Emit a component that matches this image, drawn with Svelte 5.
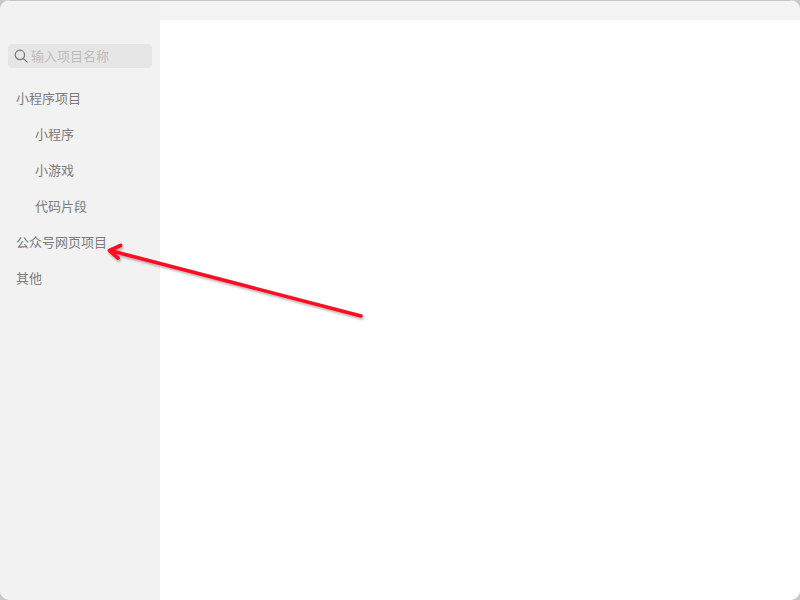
<script lang="ts">
  const items = [
    { label: "小程序项目", child: false },
    { label: "小程序", child: true },
    { label: "小游戏", child: true },
    { label: "代码片段", child: true },
    { label: "公众号网页项目", child: false },
    { label: "其他", child: false },
  ];
</script>

<div class="desktop">
  <div class="window">
    <aside class="sidebar">
      <div class="search">
        <svg class="search-icon" width="14" height="14" viewBox="0 0 14 14" fill="none" stroke="#777" stroke-width="1.2">
          <circle cx="5.9" cy="5.9" r="4.7" />
          <path d="M9.3 9.3 13.2 13.2" stroke-linecap="round" />
        </svg>
        <span class="placeholder">输入项目名称</span>
      </div>
      <nav class="menu">
        {#each items as item}
          <div class="item" class:child={item.child}>{item.label}</div>
        {/each}
      </nav>
    </aside>
    <main class="main">
      <div class="titlebar"></div>
      <div class="content"></div>
    </main>
  </div>

  <svg class="arrow" width="800" height="600" viewBox="0 0 800 600" fill="none">
    <defs>
      <filter id="arrow-shadow" x="-10%" y="-20%" width="120%" height="150%">
        <feDropShadow dx="1" dy="2" stdDeviation="1.2" flood-color="#000" flood-opacity="0.28" />
      </filter>
    </defs>
    <g filter="url(#arrow-shadow)" stroke="#ff0a20" stroke-linecap="round" stroke-linejoin="round">
      <path d="M361 316 112 251" stroke-width="3.5" />
      <path d="M120.5 245.5 109.5 250.5 118 258" stroke-width="3.8" />
    </g>
  </svg>
</div>

<style>
  :global(body) {
    margin: 0;
    background: #fff;
  }

  .desktop {
    position: relative;
    width: 800px;
    height: 600px;
    overflow: hidden;
    background: #c9c9c9;
  }

  .window {
    display: flex;
    width: 800px;
    height: 600px;
    box-sizing: border-box;
    border-radius: 10px;
    overflow: hidden;
    background: #fff;
    font-family: "Liberation Sans", "Noto Sans CJK SC", sans-serif;
  }

  .sidebar {
    width: 160px;
    flex-shrink: 0;
    box-sizing: border-box;
    padding-top: 43px;
    background: #f2f2f2;
    border-top: 1px solid #c8c8c8;
  }

  .search {
    display: flex;
    align-items: center;
    height: 24px;
    margin: 0 8px;
    padding-left: 6px;
    gap: 3px;
    border-radius: 3px;
    background: #e6e6e6;
  }

  .search-icon {
    flex-shrink: 0;
    margin-bottom: 1px;
  }

  .placeholder {
    font-size: 13px;
    line-height: 22px;
    margin-top: 2px;
    color: #bdbdbd;
  }

  .menu {
    margin-top: 13px;
  }

  .item {
    height: 36px;
    line-height: 36px;
    padding-left: 16px;
    font-size: 13px;
    color: #7c7c7c;
  }

  .item.child {
    padding-left: 35px;
  }

  .main {
    flex: 1;
    display: flex;
    flex-direction: column;
  }

  .titlebar {
    height: 20px;
    box-sizing: border-box;
    background: #f3f3f3;
    border-top: 1px solid #c8c8c8;
  }

  .content {
    flex: 1;
    background: #fff;
  }

  .arrow {
    position: absolute;
    left: 0;
    top: 0;
    pointer-events: none;
  }
</style>
